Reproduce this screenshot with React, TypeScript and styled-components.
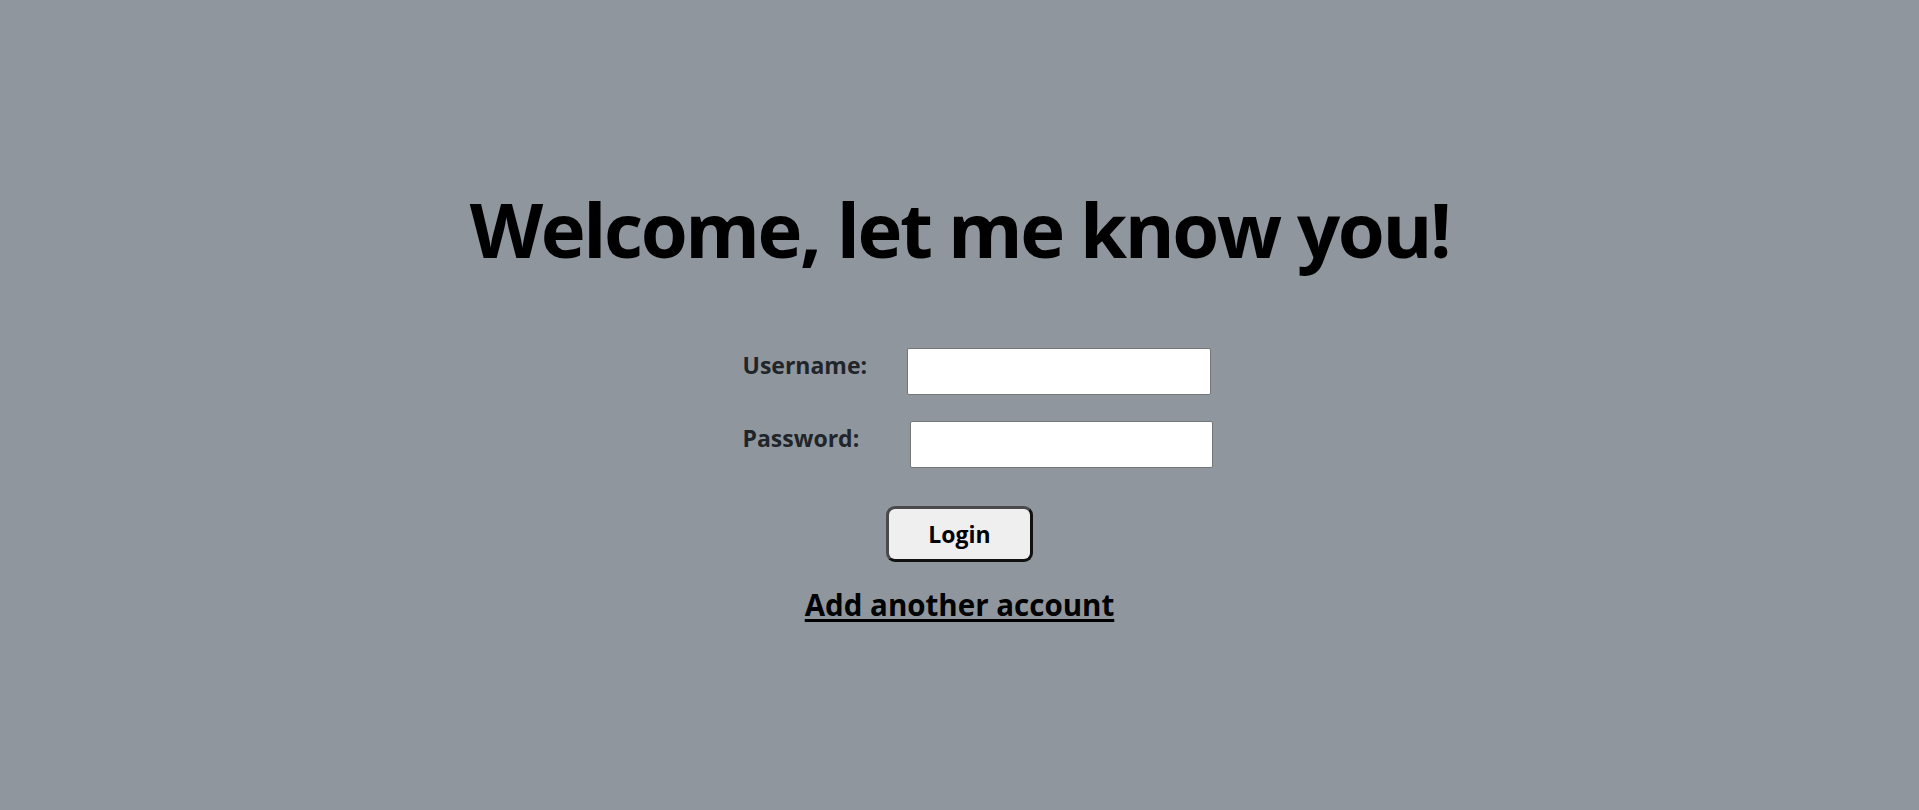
import React from "react";
import styled, { createGlobalStyle } from "styled-components";

const Global = createGlobalStyle`
  html, body { margin: 0; padding: 0; }
  body {
    background: #8f969d;
    font-family: "Open Sans", "Noto Sans", sans-serif;
    min-height: 810px;
  }
`;

const Page = styled.main`
  display: flex;
  flex-direction: column;
  align-items: center;
  padding-top: 174px;
`;

const Title = styled.h1`
  margin: 0;
  font-size: 76px;
  line-height: 110px;
  letter-spacing: -2.4px;
  font-weight: 700;
  color: #000;
`;

const Fields = styled.div`
  display: flex;
  flex-direction: column;
  gap: 26px;
  width: 470px;
  margin-top: 64px;
  margin-left: 36px;
`;

const Row = styled.div`
  display: flex;
  align-items: flex-start;
`;

const Label = styled.label<{ $width: number }>`
  width: ${(p) => p.$width}px;
  flex: none;
  font-size: 23px;
  line-height: 32px;
  padding-top: 1px;
  font-weight: 700;
  color: #212529;
`;

const Input = styled.input`
  width: 304px;
  height: 47px;
  box-sizing: border-box;
  border: 1px solid #767676;
  border-radius: 2px;
  background: #fff;
  padding: 0 8px;
  font-size: 18px;
  outline: none;
`;

const Button = styled.button`
  margin-top: 38px;
  width: 147px;
  height: 56px;
  box-sizing: border-box;
  background: #efefef;
  border: 3px solid;
  border-color: #4a4a4a #111 #111 #4a4a4a;
  border-radius: 9px;
  font-family: inherit;
  font-size: 23px;
  font-weight: 700;
  color: #000;
  cursor: pointer;
`;

const Link = styled.a`
  margin-top: 24px;
  font-size: 29.5px;
  line-height: 38px;
  font-weight: 700;
  color: #000;
  text-decoration: underline;
  text-underline-offset: 3px;
  text-decoration-thickness: 3px;
`;

export default function App() {
  return (
    <>
      <Global />
      <Page>
        <Title>Welcome, let me know you!</Title>
        <Fields>
          <Row>
            <Label $width={164} htmlFor="u">Username:</Label>
            <Input id="u" type="text" />
          </Row>
          <Row>
            <Label $width={167} htmlFor="p">Password:</Label>
            <Input id="p" type="password" />
          </Row>
        </Fields>
        <Button>Login</Button>
        <Link href="#">Add another account</Link>
      </Page>
    </>
  );
}
